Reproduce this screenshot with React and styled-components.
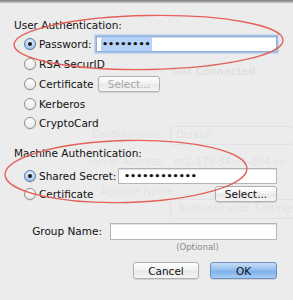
import React from "react";
import styled, { createGlobalStyle } from "styled-components";

const Global = createGlobalStyle`
  html, body { margin: 0; padding: 0; }
  body {
    background: #ececec;
    font-family: "DejaVu Sans", "Liberation Sans", sans-serif;
    font-size: 10.5px;
    color: #111;
    width: 293px;
    height: 300px;
    overflow: hidden;
  }
`;

const Page = styled.div`
  position: relative;
  width: 293px;
  height: 300px;
  background: #ececec;
  display: flex;
  flex-direction: column;
`;

const TopEdge = styled.div`
  height: 3px;
  background: linear-gradient(#7d7d7d, #c9c9c9);
  flex: none;
`;

const Ghost = styled.div`
  position: absolute;
  inset: 0;
  pointer-events: none;
  color: rgba(0, 0, 0, 0.05);
  font-size: 10px;
  filter: blur(0.4px);
  overflow: hidden;
`;

const GhostText = styled.span`
  position: absolute;
  white-space: nowrap;
  line-height: 11px;
  font-weight: ${(p) => (p.$bold ? 700 : 400)};
  font-size: ${(p) => p.$size || "10px"};
`;

const GhostBox = styled.div`
  position: absolute;
  border: 1px solid rgba(0, 0, 0, 0.04);
  border-radius: 3px;
`;

const Content = styled.div`
  position: relative;
  display: flex;
  flex-direction: column;
  padding: 0 16px 0 14px;
`;

const SectionTitle = styled.div`
  height: 14px;
  line-height: 14px;
  margin-top: ${(p) => p.$top}px;
  white-space: nowrap;
`;

const Options = styled.div`
  display: flex;
  flex-direction: column;
  padding-left: 10px;
  margin-top: ${(p) => p.$top || 0}px;
`;

const Row = styled.div`
  display: flex;
  align-items: center;
  height: ${(p) => p.$h || 19.5}px;
`;

const Radio = styled.span`
  box-sizing: border-box;
  width: 12px;
  height: 12px;
  border-radius: 50%;
  flex: none;
  display: flex;
  align-items: center;
  justify-content: center;
  border: 1px solid ${(p) => (p.$on ? "#5d7fa8" : "#8e8e8e")};
  background: ${(p) =>
    p.$on
      ? "radial-gradient(circle at 50% 30%, #e6f1fc, #a9c9ee 70%, #7fa9db)"
      : "linear-gradient(#ffffff, #eaeaea)"};
  box-shadow: 0 0.5px 1px rgba(0, 0, 0, 0.15);
  &::after {
    content: "";
    display: ${(p) => (p.$on ? "block" : "none")};
    width: 4px;
    height: 4px;
    border-radius: 50%;
    background: #1b1b1b;
  }
`;

const Label = styled.span`
  margin-left: 3px;
  white-space: nowrap;
  width: ${(p) => (p.$w ? `${p.$w}px` : "auto")};
  flex: none;
`;

const Field = styled.div`
  box-sizing: border-box;
  height: ${(p) => p.$h || 16}px;
  flex: 1;
  background: #fff;
  border: 1px solid ${(p) => (p.$focus ? "#8fb1dc" : "#b5b5b5")};
  box-shadow: ${(p) =>
    p.$focus ? "0 0 0 1.5px #a6c4ea, inset 0 1px 0 #ddd" : "inset 0 1px 0 #e2e2e2"};
  display: flex;
  align-items: center;
  padding-left: ${(p) => p.$pad || 5}px;
  overflow: hidden;
`;

const Dots = styled.span`
  font-size: 9.5px;
  font-weight: 700;
  letter-spacing: 0px;
  line-height: 14px;
  padding: 0 1px;
  background: ${(p) => (p.$sel ? "#b5d3f7" : "transparent")};
  height: 14px;
  display: flex;
  align-items: center;
`;

const PushButton = styled.div`
  box-sizing: border-box;
  width: ${(p) => p.$w}px;
  height: ${(p) => p.$h || 16}px;
  border-radius: 3px;
  border: 1px solid ${(p) => (p.$primary ? "#6f8fc0" : "#b0b0b0")};
  background: ${(p) =>
    p.$primary
      ? "linear-gradient(#c8def8, #90bbee 50%, #7aacea 51%, #a8cdf6)"
      : "linear-gradient(#ffffff, #f1f1f1 50%, #e7e7e7 51%, #f6f6f6)"};
  color: ${(p) => (p.$disabled ? "#a8a8a8" : "#111")};
  display: flex;
  align-items: center;
  justify-content: center;
  flex: none;
  box-shadow: 0 1px 1px rgba(0, 0, 0, 0.12);
  margin-left: ${(p) => p.$ml || 0}px;
`;

const Spacer = styled.div`
  flex: 1;
`;

const GroupRow = styled.div`
  display: flex;
  align-items: center;
  height: 18px;
  margin-top: ${(p) => p.$top}px;
`;

const GroupLabel = styled.span`
  width: 96px;
  text-align: right;
  padding-right: 8px;
  box-sizing: border-box;
  white-space: nowrap;
  flex: none;
`;

const Hint = styled.div`
  margin-top: 1px;
  padding-left: 104px;
  text-align: center;
  font-size: 8.5px;
  color: #8a8a8a;
  height: 12px;
  line-height: 12px;
`;

const Buttons = styled.div`
  display: flex;
  justify-content: flex-end;
  margin-top: ${(p) => p.$top}px;
`;

const Annot = styled.svg`
  position: absolute;
  left: 0;
  top: 0;
  pointer-events: none;
`;

export default function App() {
  return (
    <Page>
      <Global />
      <Ghost>
        <GhostText style={{ left: 172, top: 66 }} $bold>Not Connected</GhostText>
        <GhostBox style={{ left: 170, top: 126, width: 122, height: 17 }} />
        <GhostText style={{ left: 92, top: 129 }}>Configuration:</GhostText>
        <GhostText style={{ left: 176, top: 129 }}>Default</GhostText>
        <GhostText style={{ left: 86, top: 156 }}>Server Address:</GhostText>
        <GhostText style={{ left: 174, top: 156 }}>ec2-176-34-71-204.eu</GhostText>
        <GhostText style={{ left: 100, top: 186 }}>Account Name:</GhostText>
        <GhostBox style={{ left: 170, top: 199, width: 123, height: 18 }} />
        <GhostText style={{ left: 178, top: 203 }}>Authentication Settings</GhostText>
      </Ghost>
      <TopEdge />
      <Content>
        <SectionTitle $top={15}>User Authentication:</SectionTitle>
        <Options $top={2}>
          <Row $h={20}>
            <Radio $on />
            <Label $w={57}>Password:</Label>
            <Field $focus $pad={4}>
              <Dots $sel>••••••••</Dots>
            </Field>
          </Row>
          <Row>
            <Radio />
            <Label>RSA SecurID</Label>
          </Row>
          <Row $h={20}>
            <Radio />
            <Label $w={59}>Certificate</Label>
            <PushButton $w={62} $disabled>Select...</PushButton>
          </Row>
          <Row $h={20}>
            <Radio />
            <Label>Kerberos</Label>
          </Row>
          <Row>
            <Radio />
            <Label>CryptoCard</Label>
          </Row>
        </Options>
        <SectionTitle $top={13}>Machine Authentication:</SectionTitle>
        <Options $top={7}>
          <Row $h={18}>
            <Radio $on />
            <Label $w={79}>Shared Secret:</Label>
            <Field $pad={4}>
              <Dots>••••••••••••</Dots>
            </Field>
          </Row>
          <Row $h={18}>
            <Radio />
            <Label>Certificate</Label>
            <Spacer />
            <PushButton $w={62}>Select...</PushButton>
          </Row>
        </Options>
        <GroupRow $top={19}>
          <GroupLabel>Group Name:</GroupLabel>
          <Field $h={17} />
        </GroupRow>
        <Hint>(Optional)</Hint>
        <Buttons $top={9}>
          <PushButton $w={66} $h={17}>Cancel</PushButton>
          <PushButton $w={67} $h={17} $primary $ml={11}>OK</PushButton>
        </Buttons>
      </Content>
      <Annot width="293" height="300" viewBox="0 0 293 300">
        <ellipse cx="148.5" cy="42.5" rx="134.5" ry="27" fill="none" stroke="#e4625a" strokeWidth="1.4" transform="rotate(-1 148.5 42.5)" />
        <ellipse cx="126" cy="171.5" rx="121" ry="31" fill="none" stroke="#e4625a" strokeWidth="1.4" transform="rotate(-1.5 126 171.5)" />
      </Annot>
    </Page>
  );
}
